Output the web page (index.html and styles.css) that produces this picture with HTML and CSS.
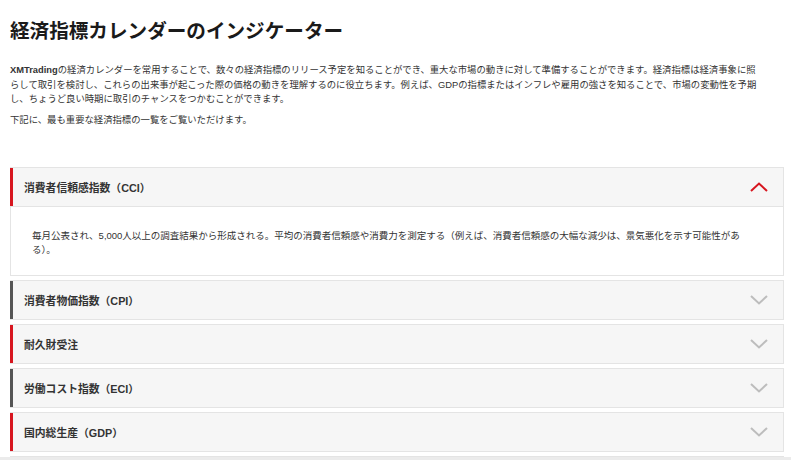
FILE: index.html
```html
<!DOCTYPE html>
<html lang="ja">
<head>
    <meta charset="UTF-8">
    <meta name="viewport" content="width=device-width, initial-scale=1.0">
    <title>経済指標カレンダーのインジケーター</title>
    <link rel="stylesheet" href="styles.css">
</head>
<body>
    <h1>経済指標カレンダーのインジケーター</h1>
    <p class="intro"><b>XMTrading</b>の経済カレンダーを常用することで、数々の経済指標のリリース予定を知ることができ、重大な市場の動きに対して準備することができます。経済指標は経済事象に照らして取引を検討し、これらの出来事が起こった際の価格の動きを理解するのに役立ちます。例えば、GDPの指標またはインフレや雇用の強さを知ることで、市場の変動性を予期し、ちょうど良い時期に取引のチャンスをつかむことができます。</p>
    <p class="intro intro-small">下記に、最も重要な経済指標の一覧をご覧いただけます。</p>

    <div class="accordion">
        <div class="item open">
            <div class="head red">
                <span>消費者信頼感指数（CCI）</span>
                <svg class="chevron up" width="18" height="10" viewBox="0 0 18 10"><polyline points="1,9 9,1.5 17,9"/></svg>
            </div>
            <div class="body">毎月公表され、5,000人以上の調査結果から形成される。平均の消費者信頼感や消費力を測定する（例えば、消費者信頼感の大幅な減少は、景気悪化を示す可能性がある）。</div>
        </div>
        <div class="item">
            <div class="head">
                <span>消費者物価指数（CPI）</span>
                <svg class="chevron" width="18" height="10" viewBox="0 0 18 10"><polyline points="1,1 9,8.5 17,1"/></svg>
            </div>
        </div>
        <div class="item">
            <div class="head red">
                <span>耐久財受注</span>
                <svg class="chevron" width="18" height="10" viewBox="0 0 18 10"><polyline points="1,1 9,8.5 17,1"/></svg>
            </div>
        </div>
        <div class="item">
            <div class="head">
                <span>労働コスト指数（ECI）</span>
                <svg class="chevron" width="18" height="10" viewBox="0 0 18 10"><polyline points="1,1 9,8.5 17,1"/></svg>
            </div>
        </div>
        <div class="item">
            <div class="head red">
                <span>国内総生産（GDP）</span>
                <svg class="chevron" width="18" height="10" viewBox="0 0 18 10"><polyline points="1,1 9,8.5 17,1"/></svg>
            </div>
        </div>
        <div class="item">
            <div class="head"></div>
        </div>
    </div>
    <div class="bottom-bar"></div>
</body>
</html>
```

FILE: styles.css
```css
body {
    margin: 0;
    padding: 0 7px 0 10px;
    background-color: #fff;
    color: #333;
    font-family: "Liberation Sans", "Noto Sans CJK JP", sans-serif;
}
h1 {
    margin: 19px 0 0;
    font-size: 19.6px;
    line-height: 24px;
    color: #1a1a1a;
}
.intro {
    max-width: 753px;
    margin: 20px 0 0;
    font-size: 9.35px;
    line-height: 14.5px;
}
.intro-small {
    margin-top: 6px;
}
.accordion {
    margin-top: 40px;
}
.item {
    border: 1px solid #e4e4e4;
    background-color: #f6f6f6;
    margin-bottom: 4px;
}
.head {
    height: 38px;
    margin-left: -1px;
    border-left: 3px solid #555;
    padding: 0 15px 0 11px;
    display: flex;
    align-items: center;
    justify-content: space-between;
    font-size: 10.8px;
    font-weight: bold;
    color: #333;
}
.head.red {
    border-left-color: #d7161f;
}
.chevron polyline {
    fill: none;
    stroke: #bdbdbd;
    stroke-width: 2;
}
.chevron.up polyline {
    stroke: #d7161f;
}
.body {
    background-color: #fff;
    border-top: 1px solid #e4e4e4;
    padding: 22px 35px 18px 21px;
    font-size: 9.5px;
    line-height: 14px;
    color: #333;
}
.bottom-bar {
    position: fixed;
    left: 0;
    right: 0;
    bottom: 0;
    height: 3px;
    background-color: #ebebeb;
}
```
